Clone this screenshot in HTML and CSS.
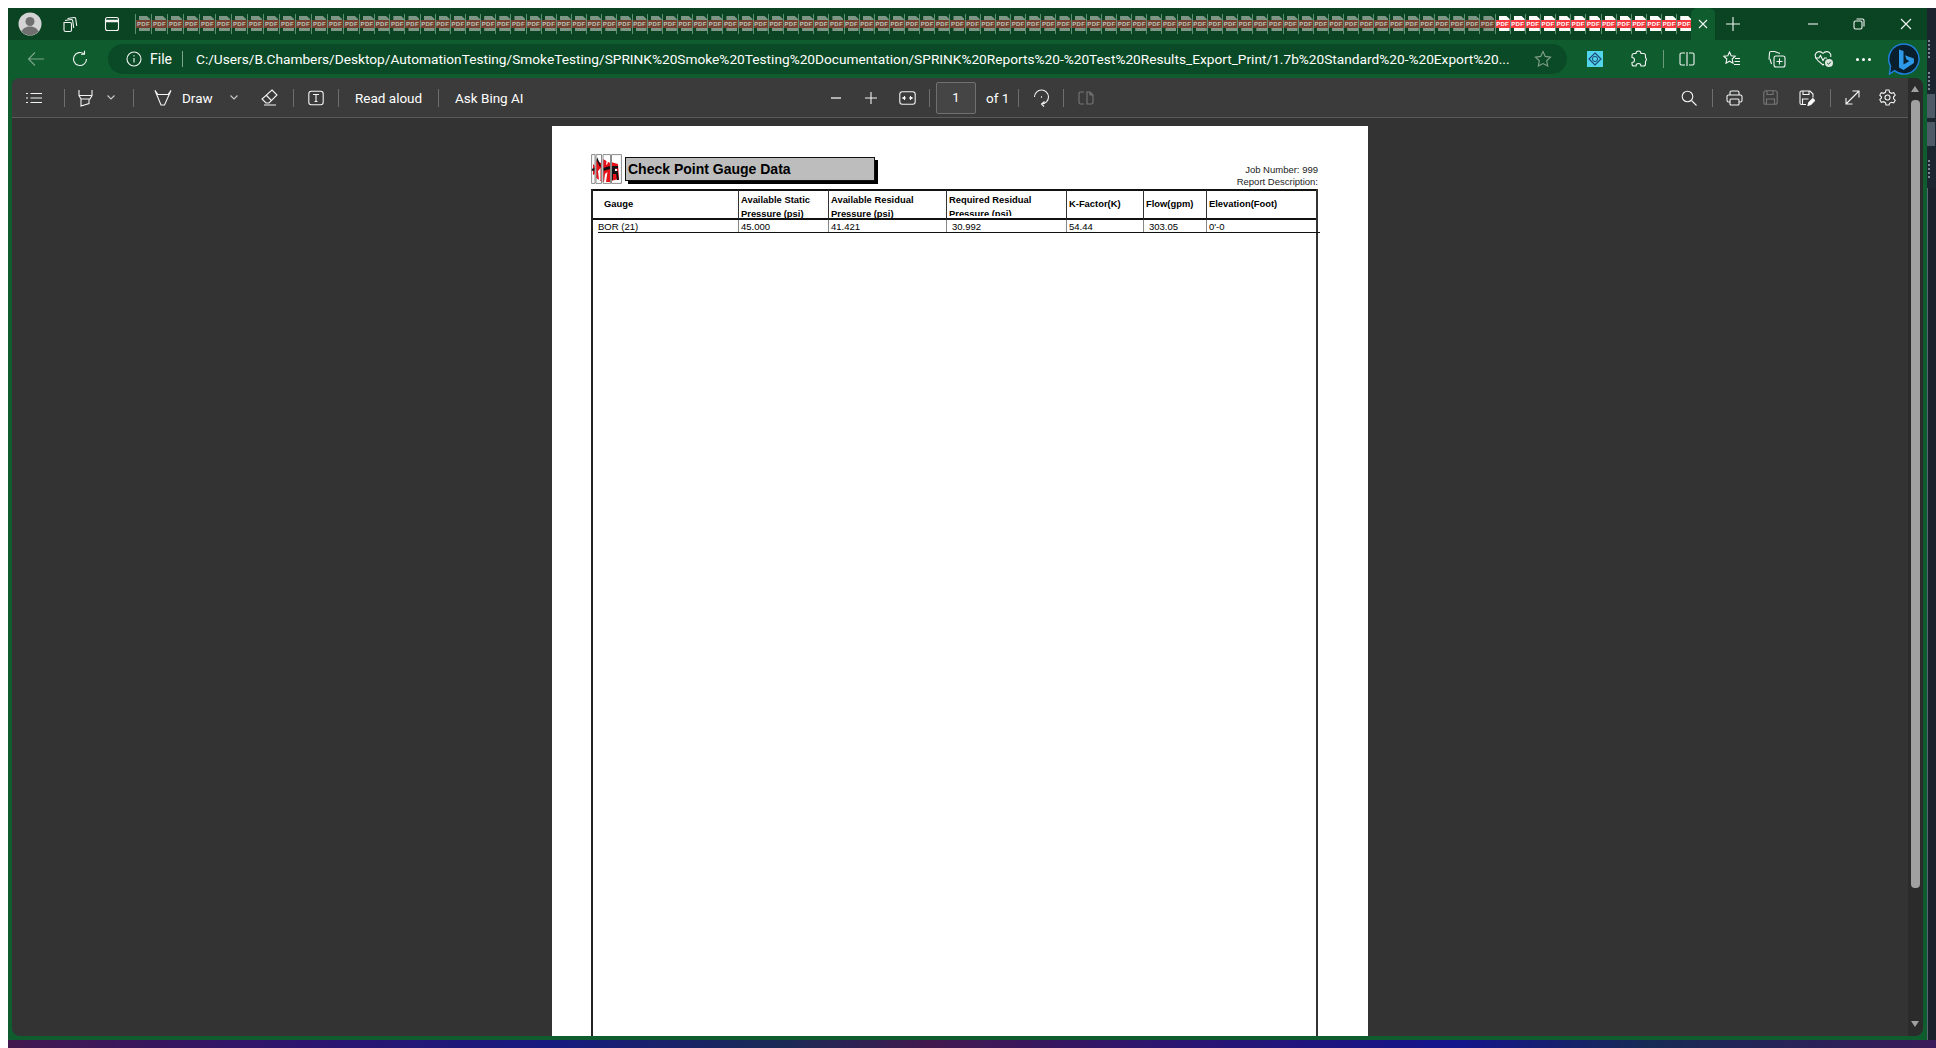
FILE: index.html
```html
<!DOCTYPE html>
<html lang="en">
<head>
    <meta charset="UTF-8">
    <title>Check Point Gauge Data</title>
    <link rel="stylesheet" href="styles.css">
</head>
<body>
    <div class="shell">
        <div class="window">
            <!-- tab strip -->
            <div class="tabbar">
                <svg class="avatar" width="24" height="24" viewBox="0 0 24 24"><circle cx="12" cy="12" r="11.5" fill="#d4d4d4"/><circle cx="12" cy="9.5" r="4.5" fill="#707070"/><path d="M3.5 19.5c1.6-3.6 4.8-5 8.5-5s6.9 1.4 8.5 5a11.5 11.5 0 0 1-17 0z" fill="#707070"/></svg>
                <svg class="ic tb-work" width="18" height="18" viewBox="0 0 18 18"><path d="M6.5 3.5 13 2.5a1.5 1.5 0 0 1 1.700 1.300l1 7M4 5.500l6-1a1.500 1.500 0 0 1 1.700 1.300l1 7M3 7.500h6a1.500 1.500 0 0 1 1.500 1.500v6A1.500 1.500 0 0 1 9 16.500H4.500A1.500 1.500 0 0 1 3 15z"/></svg>
                <svg class="ic tb-tabs" width="16" height="16" viewBox="0 0 16 16"><rect x="1.5" y="1.5" width="13" height="13" rx="2"/><path d="M1.5 5h13" stroke-width="2.5"/></svg>
                <div class="tabs" id="tabs"></div>
                <div class="tab-active"><svg class="ic" width="12" height="12" viewBox="0 0 12 12"><path d="M2 2l8 8M10 2l-8 8"/></svg></div>
                <svg class="ic tb-plus" width="16" height="16" viewBox="0 0 16 16"><path d="M8 1v14M1 8h14"/></svg>
                <svg class="ic tb-min" width="12" height="12" viewBox="0 0 12 12"><path d="M1 6h10"/></svg>
                <svg class="ic tb-restore" width="12" height="12" viewBox="0 0 12 12"><rect x="1" y="3" width="8" height="8" rx="1.5"/><path d="M3.5 1H9.5a1.500 1.500 0 0 1 1.500 1.500V8.500"/></svg>
                <svg class="ic tb-close" width="12" height="12" viewBox="0 0 12 12"><path d="M1 1l10 10M11 1 1 11"/></svg>
            </div>

            <!-- address bar -->
            <div class="addressbar">
                <svg class="ic dim ab-back" width="18" height="16" viewBox="0 0 18 16"><path d="M17 8H1.500M8 1.500 1.500 8 8 14.500"/></svg>
                <svg class="ic ab-refresh" width="18" height="18" viewBox="0 0 18 18"><path d="M15.500 9a6.500 6.500 0 1 1-2.300-5M13.500 0.800V4.300H10"/></svg>
                <div class="urlbox">
                    <svg class="ic" width="16" height="16" viewBox="0 0 16 16"><circle cx="8" cy="8" r="7"/><path d="M8 7v4.500M8 4.200v1.300"/></svg>
                    <span class="url-file">File</span>
                    <span class="url-sep"></span>
                    <span class="url-text">C:/Users/B.Chambers/Desktop/AutomationTesting/SmokeTesting/SPRINK%20Smoke%20Testing%20Documentation/SPRINK%20Reports%20-%20Test%20Results_Export_Print/1.7b%20Standard%20-%20Export%20...</span>
                    <svg class="ic dim2 url-star" width="18" height="18" viewBox="0 0 18 18"><path d="M9 1.500l2.300 4.900 5.200.7-3.800 3.700 1 5.300L9 13.600l-4.700 2.500 1-5.300L1.500 7.100l5.200-.7z"/></svg>
                </div>
                <svg class="ab-ext" width="16" height="16" viewBox="0 0 16 16"><rect width="16" height="16" fill="#52d4ec"/><path d="M8 2l6 6-6 6-6-6z" fill="none" stroke="#1d4a78" stroke-width="1.200"/><circle cx="8" cy="8" r="2.600" fill="none" stroke="#1d4a78"/></svg>
                <svg class="ic ab-puzzle" width="16" height="18" viewBox="0 0 16 18"><path d="M5 3.500a2.500 2.500 0 0 1 5 0h2.500a2 2 0 0 1 2 2v2.300a2 2 0 0 1 0 3.400v2.800a2 2 0 0 1-2 2H10a2.500 2.500 0 0 0-5 0H3a2 2 0 0 1-2-2v-1.500a2.500 2.500 0 0 0 0-5V5.500a2 2 0 0 1 2-2z"/></svg>
                <span class="ab-sep"></span>
                <svg class="ic ab-split" width="16" height="14" viewBox="0 0 16 14"><path d="M6 1H2.500A1.500 1.500 0 0 0 1 2.500v9A1.500 1.500 0 0 0 2.500 13H6M10 1h3.500A1.500 1.500 0 0 1 15 2.500v9a1.500 1.500 0 0 1-1.500 1.500H10M8 0v14"/></svg>
                <svg class="ic ab-fav" width="18" height="16" viewBox="0 0 18 16"><path d="M6.500 1l1.700 3.700 4 .5-3 2.800.8 4.200-3.500-2-3.500 2 .8-4.200-3-2.800 4-.5zM12 7.500h5M11.500 10.500h5.500M11 13.500h6"/></svg>
                <svg class="ic ab-coll" width="18" height="18" viewBox="0 0 18 18"><path d="M6.500 1.500H3A1.500 1.500 0 0 0 1.500 3L1 9.500M12 3.500l-5.500-2M2 9l1.500 5"/><rect x="6" y="6" width="11" height="11" rx="2"/><path d="M11.500 8.500v6M8.500 11.500h6"/></svg>
                <svg class="ab-heart" width="20" height="18" viewBox="0 0 20 18"><path class="stroke" d="M9 3.500C7 .8 2.800 1 1.500 4c-1 2.500.5 4.800 2.500 6.700l5 4.300 1-1M9 3.500c2-2.700 6.200-2.500 7.500.5.400 1 .4 2 .2 3M1 8h4l1.500-2.500L9 10.500 10.500 8H13"/><circle cx="15" cy="13" r="4" fill="#dfe7e1"/><path d="M13.200 13l1.300 1.300 2.300-2.600" fill="none" stroke="#0f5c2f"/></svg>
                <span class="ab-more"><i></i><i></i><i></i></span>
                <svg class="ab-bing" width="32" height="32" viewBox="0 0 32 32"><path d="M16 1a15 15 0 1 1-9.500 26.600L1.500 31l1-8A15 15 0 0 1 16 1z" fill="#0a1f2e" stroke="#1d7fd8" stroke-width="1.500"/><path d="M11 6.500l4.500 1.600v13.500l6-3.600-2.800-1.300-1.800-4.500 9 3.200v4.600L15.500 27 11 24.500z" fill="#2c9ae8"/></svg>
            </div>

            <div class="viewer">
                <div class="viewer-main">
                    <!-- pdf toolbar -->
                    <div class="pdfbar">
                        <div class="pdf-left">
                            <svg class="ic pl-list" width="16" height="12" viewBox="0 0 16 12"><path d="M0 1.500h2M4.500 1.500H16M0 6h2M4.500 6H16M0 10.500h2M4.500 10.500H16"/></svg>
                            <span class="bar-sep pl-s1"></span>
                            <svg class="ic pl-high" width="15" height="18" viewBox="0 0 15 18"><path d="M1 1v5.500L3 10h9l2-3.500V1M1 6.500h13M3 10v7l8-2.500V10"/></svg>
                            <svg class="ic chev pl-c1" width="8" height="5" viewBox="0 0 8 5"><path d="M.5.500 4 4l3.500-3.500"/></svg>
                            <span class="bar-sep pl-s2"></span>
                            <svg class="ic pl-draw" width="18" height="18" viewBox="0 0 18 18"><path d="M1 1.500 7 16h3.500L17 1.500M1 1.500l3 4h10l3-4"/></svg>
                            <span class="bar-text pl-t1">Draw</span>
                            <svg class="ic chev pl-c2" width="8" height="5" viewBox="0 0 8 5"><path d="M.5.500 4 4l3.500-3.500"/></svg>
                            <svg class="ic pl-erase" width="17" height="17" viewBox="0 0 17 17"><path d="M11 1 16 6 8 14H5L1 10zM5 6l5 5M3 16h12"/></svg>
                            <span class="bar-sep pl-s3"></span>
                            <svg class="ic pl-txt" width="16" height="16" viewBox="0 0 16 16"><rect x=".8" y="1.300" width="14.400" height="13.400" rx="2.500"/><path d="M5 4.500h6M8 4.500v7M6.500 11.500h3"/></svg>
                            <span class="bar-sep pl-s4"></span>
                            <span class="bar-text pl-t2">Read aloud</span>
                            <span class="bar-sep pl-s5"></span>
                            <span class="bar-text pl-t3">Ask Bing AI</span>
                        </div>
                        <div class="pdf-center">
                            <svg class="ic dim3" width="10" height="2" viewBox="0 0 10 2"><path d="M0 1h10"/></svg>
                            <svg class="ic pc-plus" width="12" height="12" viewBox="0 0 12 12"><path d="M6 0v12M0 6h12"/></svg>
                            <svg class="ic pc-fit" width="17" height="14" viewBox="0 0 17 14"><rect x=".8" y=".8" width="15.400" height="12.400" rx="2.500"/><path d="M3.500 7h3M13.500 7h-3" stroke-width="2"/><path d="M5.500 5v4M11.500 5v4"/></svg>
                            <span class="bar-sep pc-s1"></span>
                            <span class="pagebox">1</span>
                            <span class="bar-text pc-of">of 1</span>
                            <span class="bar-sep pc-s2"></span>
                            <svg class="ic pc-rot" width="17" height="19" viewBox="0 0 17 19"><path d="M1.500 9A7 7 0 1 1 8.500 16M11.500 13.500 8.500 16 11 18.500"/><path d="M8.500 8.300v1.400"/></svg>
                            <span class="bar-sep pc-s3"></span>
                            <svg class="ic off pc-two" width="16" height="14" viewBox="0 0 16 14"><path d="M6 1H2.500A1.500 1.500 0 0 0 1 2.500v9A1.500 1.500 0 0 0 2.500 13H6M9 1h3l3 3v7.500a1.500 1.500 0 0 1-1.500 1.500H9zM12 1v3h3"/></svg>
                        </div>
                        <div class="pdf-right">
                            <svg class="ic" width="16" height="16" viewBox="0 0 16 16"><circle cx="6.500" cy="6.500" r="5.300"/><path d="M10.500 10.500 15.500 15.500"/></svg>
                            <span class="bar-sep pr-s1"></span>
                            <svg class="ic pr-print" width="17" height="16" viewBox="0 0 17 16"><path d="M4 5V2.500A1.500 1.500 0 0 1 5.500 1h6A1.500 1.500 0 0 1 13 2.500V5M4 12H2.500A1.500 1.500 0 0 1 1 10.500v-4A1.500 1.500 0 0 1 2.500 5h12A1.500 1.500 0 0 1 16 6.500v4a1.500 1.500 0 0 1-1.500 1.500H13"/><rect x="4" y="9" width="9" height="6" rx="1"/></svg>
                            <svg class="ic off pr-save" width="15" height="15" viewBox="0 0 15 15"><rect x=".8" y=".8" width="13.400" height="13.400" rx="2"/><path d="M4 1v3.500h6V1M3.500 14V9h8v5"/></svg>
                            <svg class="ic pr-saveas" width="16" height="16" viewBox="0 0 16 16"><path d="M7 14.500H2.500A1.500 1.500 0 0 1 1 13V2.500A1.500 1.500 0 0 1 2.500 1h8.500l3 3v3.500M4 1v3.500h6V1M3.500 14.500V9h6"/><path d="M9 15.500l.8-3 4-4 2 2-4 4z" fill="#fff"/></svg>
                            <span class="bar-sep pr-s2"></span>
                            <svg class="ic pr-expand" width="15" height="15" viewBox="0 0 15 15"><path d="M1 14 14 1M7.500 1H14v6.500M1 8v6h6.500"/></svg>
                            <svg class="ic pr-gear" width="17" height="17" viewBox="0 0 17 17"><circle cx="8.500" cy="8.500" r="2.500"/><path d="M7 1h3l.6 2.300 1.800 1 2.300-.7 1.500 2.600L14.500 8v1.600l1.700 1.700-1.500 2.600-2.300-.6-1.800 1L10 16H7l-.6-2.300-1.800-1-2.300.6L.8 10.700 2.500 9V8L.8 6.200l1.500-2.600 2.300.7 1.800-1z"/></svg>
                        </div>
                    </div>

                    <div class="canvas">
                        <div class="page">
                            <div class="report-head">
                                <svg class="logo" width="31" height="30" viewBox="0 0 31 30">
                                    <rect width="31" height="30" fill="#fff"/>
                                    <path d="M2 10 4 12V20L2 21zM5 6 10 9V27L5 24zM12 5 19 9V28H12zM20 8 27 10 28 25 20 27z" fill="#e8111a"/>
                                    <path d="M0 15 4 14V16.500L0 17zM6 3 10 12 9 13 5.500 6zM12 14 19 12V15L12 17zM21 12H27V14.500H24V17H27V19.500L28 26H26L25 20H22V26H20.500V12z" fill="#111"/>
                                    <path d="M7 17 9.500 14V26H8zM14 20 16.500 18 15 28H13zM17 1 19 1 16 11 15 10zM24 15V17H26V15z" fill="#fff"/>
                                    <path d="M.6.600H4V29.400H.6zM5 .6H10.500V29.400H5zM12 .6H19.500V29.400H12zM20.500 .6H30.400V29.400H20.500z" fill="none" stroke="#8c8c8c"/>
                                </svg>
                                <div class="report-title">Check Point Gauge Data</div>
                                <div class="report-meta">
                                    <div>Job Number: 999</div>
                                    <div>Report Description:</div>
                                </div>
                            </div>
                            <div class="report-box">
                                <table class="gauge-table">
                                    <thead>
                                        <tr>
                                            <th class="col-gauge"><div class="th-clip th-mid th-gauge">Gauge</div></th>
                                            <th class="col-static"><div class="th-clip">Available Static<br>Pressure (psi)</div></th>
                                            <th class="col-resid"><div class="th-clip">Available Residual<br>Pressure (psi)</div></th>
                                            <th class="col-req"><div class="th-clip th-short">Required Residual<br>Pressure (psi)</div></th>
                                            <th class="col-k"><div class="th-clip th-mid">K-Factor(K)</div></th>
                                            <th class="col-flow"><div class="th-clip th-mid">Flow(gpm)</div></th>
                                            <th><div class="th-clip th-mid">Elevation(Foot)</div></th>
                                        </tr>
                                    </thead>
                                    <tbody>
                                        <tr>
                                            <td><span class="td-first">BOR (21)</span></td>
                                            <td>45.000</td>
                                            <td>41.421</td>
                                            <td class="td-in">30.992</td>
                                            <td>54.44</td>
                                            <td class="td-in">303.05</td>
                                            <td>0'-0</td>
                                        </tr>
                                    </tbody>
                                </table>
                                <div class="row-rule"></div>
                            </div>
                        </div>
                    </div>
                </div>
                <div class="scrollbar">
                    <span class="arrow-up"></span>
                    <span class="thumb"></span>
                    <span class="arrow-down"></span>
                </div>
            </div>
        </div>
        <div class="side">
            <span class="side-dots"></span>
            <span class="side-dots"></span>
            <span class="side-item"></span>
            <span class="side-item"></span>
            <span class="side-dots"></span>
            <div class="side-panel"></div>
        </div>
    </div>
    <div class="taskbar"></div>
    <script src="script.js"></script>
</body>
</html>
```

FILE: styles.css
```css
html, body {
    margin: 0;
    height: 100%;
    overflow: hidden;
}
body {
    background-color: #fff;
    padding: 8px 0 0 8px;
    box-sizing: border-box;
    font-family: Roboto, "Open Sans", sans-serif;
    color: #fff;
}
.shell {
    display: flex;
    height: 1032px;
}
.window {
    width: 1920px;
    display: flex;
    flex-direction: column;
    background-color: #0f5c2f;
}
.side {
    flex: 1;
    background-color: #1b2530;
    display: flex;
    flex-direction: column;
    align-items: flex-start;
    gap: 14px;
    padding-top: 32px;
}
.side-dots {
    width: 2px;
    height: 18px;
    margin-left: 1px;
    background: repeating-linear-gradient(#7a8794 0 2px, transparent 2px 4px);
}
.side-item {
    width: 8px;
    height: 24px;
    margin-top: -10px;
    background-color: #4d5a68;
}
.side-panel {
    flex: 1;
    width: 8px;
    margin-top: -4px;
    background-color: #18212c;
    border-left: 1px solid #5a6672;
}
.taskbar {
    height: 8px;
    background: linear-gradient(90deg, #43184f 0%, #2c1570 16%, #181a80 28%, #1a2a55 40%, #43184f 48%, #2c1570 60%, #14148c 75%, #172a55 85%, #3a1a5a 100%);
}
svg {
    display: block;
    flex: none;
}
.ic, .stroke {
    fill: none;
    stroke: #f2f5f3;
    stroke-width: 1.1;
}
.dim { stroke: #7fa58d; }
.dim2 { stroke: #84a08e; }
.dim3 { stroke: #b0b0b0; stroke-width: 2; }
.off { stroke: #777; }

/* tab strip */
.tabbar {
    height: 32px;
    display: flex;
    align-items: center;
    background-color: #0a4423;
    flex: none;
}
.avatar { margin-left: 10px; }
.tb-work { margin-left: 19px; }
.tb-tabs { margin-left: 25px; }
.tabs {
    display: flex;
    margin-left: 15px;
    height: 20px;
}
.tab {
    width: 15.15px;
    position: relative;
    box-sizing: border-box;
    border-left: 1px solid #5f8f72;
    flex: none;
}
.tab.wide { width: 16px; }
.tab-doc {
    position: absolute;
    left: 3px;
    top: 2px;
    width: 11px;
    height: 15px;
    background-color: #7d9686;
    clip-path: polygon(0 0, 72% 0, 100% 20%, 100% 100%, 0 100%);
}
.tab-band {
    position: absolute;
    left: 0;
    right: 0;
    top: 6px;
    height: 8px;
    background-color: #74402f;
    font: bold 6px/8px "Liberation Sans", sans-serif;
    letter-spacing: .3px;
    text-align: center;
    color: #b9c5bb;
    overflow: hidden;
}
.tab.on .tab-doc { background-color: #fff; }
.tab.on .tab-band { background-color: #f5393f; color: #fff; }
.tab-active {
    width: 24px;
    height: 32px;
    background-color: #0f5c2f;
    border-radius: 6px 6px 0 0;
    display: flex;
    align-items: center;
    justify-content: center;
    flex: none;
}
.tb-plus { margin-left: 10px; }
.tb-min { margin-left: 66px; }
.tb-restore { margin-left: 34px; }
.tb-close { margin-left: 35px; }

/* address bar */
.addressbar {
    height: 38px;
    display: flex;
    align-items: center;
    flex: none;
}
.ab-back { margin-left: 19px; }
.ab-refresh { margin-left: 26px; }
.urlbox {
    width: 1459px;
    height: 30px;
    margin-left: 19px;
    padding-left: 18px;
    box-sizing: border-box;
    border-radius: 15px;
    background-color: #0b4a26;
    display: flex;
    align-items: center;
    font-size: 14px;
}
.url-file { margin-left: 8px; }
.url-sep {
    width: 1px;
    height: 16px;
    margin-left: 10px;
    background-color: #7fa58d;
}
.url-text {
    margin-left: 13px;
    width: 1320px;
    font-size: 13.7px;
    white-space: nowrap;
    flex: none;
}
.url-star { margin-left: 18px; }
.ab-ext { margin-left: 20px; }
.ab-puzzle { margin-left: 28px; }
.ab-sep {
    width: 1px;
    height: 18px;
    margin-left: 16px;
    background-color: #6b9a7d;
}
.ab-split { margin-left: 15px; }
.ab-fav { margin-left: 28px; }
.ab-coll { margin-left: 27px; }
.ab-heart { margin-left: 28px; }
.ab-more {
    display: flex;
    gap: 3px;
    margin-left: 22px;
}
.ab-more i {
    width: 3px;
    height: 3px;
    border-radius: 50%;
    background-color: #fff;
}
.ab-bing { margin-left: 17px; }

/* pdf viewer */
.viewer {
    flex: 1;
    min-height: 0;
    margin: 0 4px 4px;
    display: flex;
    background-color: #333;
    border-radius: 8px;
    overflow: hidden;
}
.viewer-main {
    flex: 1;
    min-width: 0;
    display: flex;
    flex-direction: column;
}
.pdfbar {
    height: 40px;
    flex: none;
    box-sizing: border-box;
    background-color: #3b3b3b;
    border-bottom: 1px solid #5a5a5a;
    display: flex;
    align-items: center;
    font-size: 13.5px;
}
.pdf-left, .pdf-center, .pdf-right {
    display: flex;
    align-items: center;
}
.bar-sep {
    width: 1px;
    height: 18px;
    background-color: #6e6e6e;
    flex: none;
}
.bar-text { white-space: nowrap; flex: none; }
.chev { stroke: #c8c8c8; }

.pl-list { margin-left: 14px; }
.pl-s1 { margin-left: 22px; }
.pl-high { margin-left: 13px; }
.pl-c1 { margin-left: 14px; }
.pl-s2 { margin-left: 18px; }
.pl-draw { margin-left: 20px; }
.pl-t1 { margin-left: 10px; width: 32px; }
.pl-c2 { margin-left: 16px; }
.pl-erase { margin-left: 23px; }
.pl-s3 { margin-left: 15px; }
.pl-txt { margin-left: 14px; }
.pl-s4 { margin-left: 14px; }
.pl-t2 { margin-left: 16px; width: 70px; }
.pl-s5 { margin-left: 13px; }
.pl-t3 { margin-left: 16px; width: 71px; }

.pdf-center { margin-left: 305px; }
.pc-plus { margin-left: 24px; }
.pc-fit { margin-left: 22px; }
.pc-s1 { margin-left: 13px; }
.pagebox {
    width: 40px;
    height: 32px;
    margin-left: 6px;
    box-sizing: border-box;
    border: 1px solid #707070;
    border-radius: 2px;
    background-color: #454545;
    display: flex;
    align-items: center;
    justify-content: center;
    font-size: 13px;
}
.pc-of { margin-left: 10px; width: 22px; }
.pc-s2 { margin-left: 10px; }
.pc-rot { margin-left: 14px; }
.pc-s3 { margin-left: 13px; }
.pc-two { margin-left: 14px; }

.pdf-right { margin-left: auto; margin-right: 12px; }
.pr-s1 { margin-left: 15px; }
.pr-print { margin-left: 13px; }
.pr-save { margin-left: 20px; }
.pr-saveas { margin-left: 21px; }
.pr-s2 { margin-left: 15px; }
.pr-expand { margin-left: 14px; }
.pr-gear { margin-left: 19px; }

.scrollbar {
    width: 15px;
    flex: none;
    background-color: #2b2b2b;
    position: relative;
}
.thumb {
    position: absolute;
    left: 3px;
    top: 22px;
    width: 9px;
    height: 788px;
    border-radius: 4px;
    background-color: #a0a0a0;
}
.arrow-up, .arrow-down {
    position: absolute;
    left: 3px;
    width: 0;
    height: 0;
    border-left: 4.5px solid transparent;
    border-right: 4.5px solid transparent;
}
.arrow-up {
    top: 8px;
    border-bottom: 6px solid #a0a0a0;
}
.arrow-down {
    bottom: 9px;
    border-top: 6px solid #a0a0a0;
}

/* page */
.canvas {
    flex: 1;
    min-height: 0;
    overflow: hidden;
    padding-top: 8px;
    display: flex;
    justify-content: center;
}
.page {
    width: 816px;
    height: 1056px;
    flex: none;
    background-color: #fff;
    color: #000;
    font-family: "Liberation Sans", Arial, sans-serif;
    padding: 28px 0 0 39px;
    box-sizing: border-box;
}
.report-head {
    width: 727px;
    height: 35px;
    display: flex;
    align-items: flex-start;
}
.report-title {
    width: 250px;
    height: 24px;
    margin: 3px 0 0 3px;
    box-sizing: border-box;
    background-color: #bdbdbd;
    border: 1px solid #111;
    box-shadow: 3px 3px 0 #000;
    font-weight: bold;
    font-size: 14px;
    line-height: 23px;
    padding-left: 2px;
    white-space: nowrap;
}
.report-meta {
    margin-left: auto;
    margin-top: 10px;
    text-align: right;
    font-size: 9.5px;
    line-height: 12px;
    color: #222;
}
.report-box {
    width: 727px;
    height: 900px;
    box-sizing: border-box;
    border-left: 2px solid #222;
    border-right: 2px solid #333;
    position: relative;
}
.gauge-table {
    width: 100%;
    table-layout: fixed;
    border-collapse: separate;
    border-spacing: 0;
    font-size: 9.5px;
}
.gauge-table th {
    height: 31px;
    padding: 0 0 0 2px;
    font-size: 9.4px;
    line-height: 14px;
    text-align: left;
    vertical-align: top;
    border-top: 2px solid #111;
    border-bottom: 2px solid #111;
    border-left: 1px solid #333;
    box-sizing: border-box;
    white-space: nowrap;
}
.gauge-table th:first-child, .gauge-table td:first-child {
    border-left: none;
}
.gauge-table td {
    height: 13px;
    padding: 0 0 0 2px;
    line-height: 12px;
    border-left: 1px solid #888;
    box-sizing: border-box;
}
.col-gauge { width: 145px; }
.col-static { width: 90px; }
.col-resid { width: 118px; }
.col-req { width: 120px; }
.col-k { width: 77px; }
.col-flow { width: 63px; }
.th-clip {
    height: 27px;
    padding-top: 2px;
    box-sizing: border-box;
    overflow: hidden;
}
.th-short { height: 25px; }
.th-mid { padding-top: 6px; }
.th-gauge { padding-left: 9px; }
.td-first { margin-left: 3px; }
.td-in { text-indent: 3px; }
.row-rule {
    position: absolute;
    left: 5px;
    right: -4px;
    top: 43px;
    height: 1px;
    background-color: #111;
}
```

FILE: script.js
```js
// tab strip: 89 dim pdf tabs then 13 bright ones
const tabs = document.getElementById('tabs');
for (let i = 0; i < 102; i++) {
    const tab = document.createElement('div');
    tab.className = 'tab';
    if (i < 14) tab.classList.add('wide');
    if (i >= 89) tab.classList.add('on');
    tab.innerHTML = '<div class="tab-doc"></div><div class="tab-band">PDF</div>';
    tabs.appendChild(tab);
}
```
